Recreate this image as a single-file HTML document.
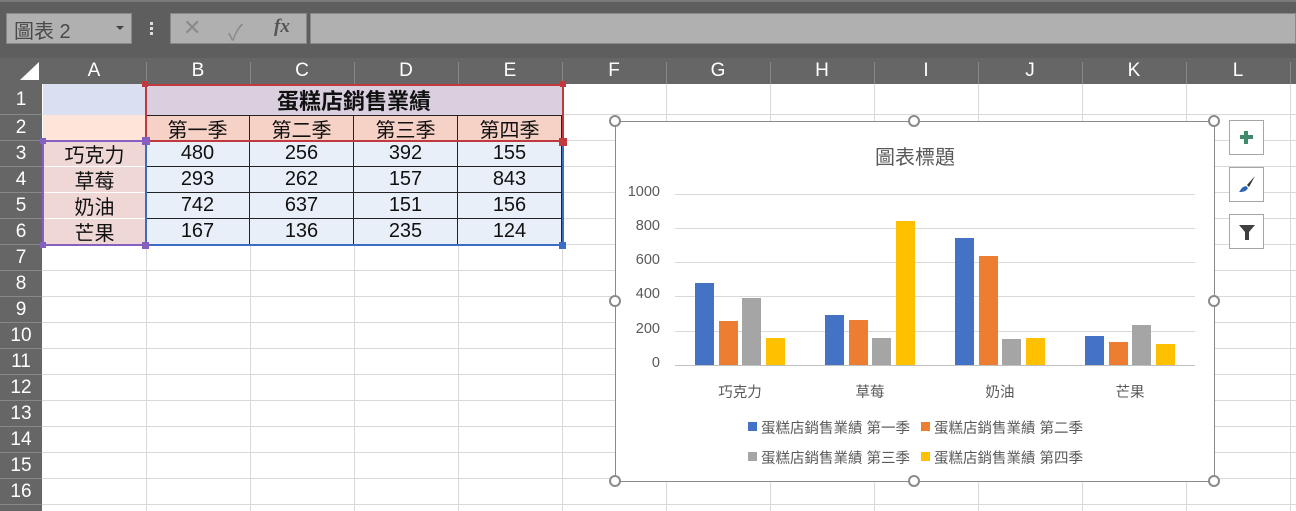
<!DOCTYPE html>
<html><head><meta charset="utf-8"><style>
*{margin:0;padding:0;box-sizing:border-box}
body{width:1296px;height:511px;overflow:hidden;background:#fff;position:relative;font-family:"Liberation Sans","Noto Sans CJK TC",sans-serif}
.a{position:absolute}
.c{position:absolute;display:flex;align-items:center;justify-content:center;font-size:20px;color:#111;font-family:"Liberation Sans","Noto Sans CJK TC",sans-serif}
.h{position:absolute;color:#fff;font-size:19px;display:flex;align-items:center;justify-content:center}
.gl{position:absolute;background:#d9d9d9}
.hd{position:absolute;width:12px;height:12px;border:2px solid #8a8a8a;border-radius:50%;background:#fff}
.t{position:absolute;font-size:14.5px;color:#595959;font-family:"Liberation Sans","Noto Sans CJK TC",sans-serif;white-space:nowrap}
</style></head><body>
<div class="a" style="left:0;top:0;width:1296px;height:58px;background:#5e5e5e;border-top:2px solid #7a7a7a"></div>
<div class="a" style="left:6px;top:13px;width:126px;height:31px;background:#b0b0b0;border:1px solid #888;font-size:20px;color:#4a4a4a;padding:1px 0 0 7px;font-family:'Liberation Sans','Noto Sans CJK TC',sans-serif">圖表 2</div>
<div class="a" style="left:116px;top:26px;border-left:4px solid transparent;border-right:4px solid transparent;border-top:4px solid #444"></div>
<div class="a" style="left:150px;top:22px;width:3px;height:13px;border-top:3px solid #ddd;border-bottom:3px solid #ddd"></div><div class="a" style="left:150px;top:27px;width:3px;height:3px;background:#ddd"></div>
<div class="a" style="left:170px;top:13px;width:137px;height:31px;background:#b0b0b0;border:1px solid #888"></div>
<div class="a" style="left:183px;top:15px;font-size:22px;color:#8a8a8a">✕</div>
<div class="a" style="left:228px;top:15px;font-size:22px;color:#8a8a8a">✓</div>
<div class="a" style="left:274px;top:16px;font-size:19px;color:#555;font-style:italic;font-weight:bold;font-family:'Liberation Serif',serif">fx</div>
<div class="a" style="left:310px;top:13px;width:986px;height:31px;background:#b0b0b0;border:1px solid #888"></div>
<div class="a" style="left:0;top:58px;width:1296px;height:26px;background:#666"></div>
<div class="a" style="left:0;top:84px;width:42px;height:427px;background:#666"></div>
<div class="a" style="left:20px;top:62px;width:0;height:0;border-left:19px solid transparent;border-bottom:18px solid #fff"></div>
<div id="hdr"></div>
<div id="grid"></div>
<script>
var s='';var L='ABCDEFGHIJKL';
for(var i=0;i<12;i++){var x=42+i*104;s+='<div class="h" style="left:'+x+'px;top:58px;width:104px;height:26px">'+L[i]+'</div><div class="a" style="left:'+(x+104)+'px;top:62px;width:1px;height:22px;background:#888"></div>';}
var rt=[84,115,141];for(var r=3;r<17;r++)rt.push(141+(r-2)*26);
for(var r=0;r<16;r++){var y=rt[r],hh=rt[r+1]-y;s+='<div class="h" style="left:0;top:'+y+'px;width:42px;height:'+hh+'px">'+(r+1)+'</div><div class="a" style="left:0;top:'+(y+hh-1)+'px;width:42px;height:1px;background:#888"></div>';}
var g='';for(var i=1;i<13;i++){g+='<div class="gl" style="left:'+(42+i*104)+'px;top:84px;width:1px;height:427px"></div>';}
for(var r=1;r<17;r++){g+='<div class="gl" style="left:42px;top:'+(rt[r]-1)+'px;width:1254px;height:1px"></div>';}
document.getElementById('hdr').outerHTML=s;document.getElementById('grid').outerHTML=g;
</script>
<div class="a" style="left:43px;top:84px;width:103px;height:31px;background:#dae0f1"></div>
<div class="c" style="left:146px;top:84px;width:416px;height:31px;background:#d9cfdf;font-weight:bold;font-size:22px">蛋糕店銷售業績</div>
<div class="a" style="left:43px;top:115px;width:103px;height:26px;background:#fde5d9"></div>
<div id="tb"></div>
<script>
var h=['第一季','第二季','第三季','第四季'],n=['巧克力','草莓','奶油','芒果'],d=[[480,256,392,155],[293,262,157,843],[742,637,151,156],[167,136,235,124]];var s='';
for(var i=0;i<4;i++)s+='<div class="c" style="left:'+(146+i*104)+'px;top:115px;width:104px;height:26px;background:#f6d1c6;border-right:1px solid #222;border-top:1px solid #222">'+h[i]+'</div>';
for(var r=0;r<4;r++){var y=141+r*26;s+='<div class="c" style="left:43px;top:'+y+'px;width:103px;height:26px;background:#efd7d5;border-bottom:1px solid #fff">'+n[r]+'</div>';
for(var i=0;i<4;i++)s+='<div class="c" style="left:'+(146+i*104)+'px;top:'+y+'px;width:104px;height:26px;background:#e9eff9;border-right:1px solid #222;border-bottom:1px solid #222">'+d[r][i]+'</div>';}
document.getElementById('tb').outerHTML=s;
</script>
<div class="a" style="left:145px;top:84px;width:419px;height:58px;border:2px solid #c0393e"></div>
<div class="a" style="left:42px;top:140px;width:105px;height:106px;border:2px solid #8660c0"></div>
<div class="a" style="left:145px;top:140px;width:419px;height:106px;border:2px solid #3c6cc4;border-top:none"></div>
<div class="a" style="left:142px;top:81px;width:6px;height:6px;background:#c0393e"></div>
<div class="a" style="left:560px;top:81px;width:6px;height:6px;background:#c0393e"></div>
<div class="a" style="left:559px;top:138px;width:8px;height:8px;background:#c0393e"></div>
<div class="a" style="left:142px;top:137px;width:8px;height:8px;background:#8660c0"></div>
<div class="a" style="left:40px;top:138px;width:6px;height:6px;background:#8660c0"></div>
<div class="a" style="left:40px;top:242px;width:6px;height:6px;background:#8660c0"></div>
<div class="a" style="left:142px;top:242px;width:7px;height:7px;background:#8660c0"></div>
<div class="a" style="left:559px;top:242px;width:7px;height:7px;background:#3c6cc4"></div>
<div class="a" style="left:615px;top:121px;width:600px;height:361px;background:#fff;border:1px solid #8a8a8a"></div>
<div class="a" style="left:615px;top:141px;width:600px;text-align:center;font-size:20px;color:#595959;font-family:'Liberation Sans','Noto Sans CJK TC',sans-serif">圖表標題</div>
<div id="ch"></div>
<script>
var s='';var ys=[365,331,296,262,228,194],lb=['0','200','400','600','800','1000'];
for(var i=0;i<6;i++){s+='<div class="a" style="left:675px;top:'+ys[i]+'px;width:520px;height:1px;background:'+(i?'#d9d9d9':'#bfbfbf')+'"></div><div class="t" style="left:610px;width:50px;text-align:right;top:'+(ys[i]-10)+'px">'+lb[i]+'</div>';}
var col=['#4472c4','#ed7d31','#a5a5a5','#ffc000'];
for(var c=0;c<4;c++){for(var q=0;q<4;q++){var v=d[c][q],hh=v*171/1000,x=695+c*130+q*23.7;s+='<div class="a" style="left:'+x+'px;top:'+(365-hh)+'px;width:19px;height:'+hh+'px;background:'+col[q]+'"></div>';}
s+='<div class="t" style="left:'+(675+c*130)+'px;width:130px;text-align:center;top:381px">'+n[c]+'</div>';}
var lg=[[748,427,0],[921,427,1],[748,457,2],[921,457,3]];
for(var i=0;i<4;i++){var L=lg[i];s+='<div class="a" style="left:'+L[0]+'px;top:'+(L[1]-5)+'px;width:9px;height:9px;background:'+col[L[2]]+'"></div><div class="t" style="left:'+(L[0]+13)+'px;top:'+(L[1]-10)+'px">蛋糕店銷售業績 '+h[L[2]]+'</div>';}
var hp=[[615,121],[914,121],[1214,121],[615,301],[1214,301],[615,481],[914,481],[1214,481]];
for(var i=0;i<8;i++)s+='<div class="hd" style="left:'+(hp[i][0]-6)+'px;top:'+(hp[i][1]-6)+'px"></div>';
document.getElementById('ch').outerHTML=s;
</script>
<div class="a" style="left:1229px;top:120px;width:35px;height:35px;background:#fff;border:1px solid #a6a6a6"></div>
<div class="a" style="left:1240px;top:135px;width:13px;height:4px;background:#3f8a6a"></div>
<div class="a" style="left:1244px;top:131px;width:4px;height:13px;background:#3f8a6a"></div>
<div class="a" style="left:1229px;top:167px;width:35px;height:35px;background:#fff;border:1px solid #a6a6a6"></div>
<svg class="a" style="left:1236px;top:174px" width="22" height="22" viewBox="0 0 22 22"><path d="M19 2 L11 11 L13 13 Z" fill="#333"/><path d="M10 12 L12 14 C10 18 6 18 3 18 C5 16 5 13 10 12Z" fill="#2e64b8"/></svg>
<div class="a" style="left:1229px;top:214px;width:35px;height:35px;background:#fff;border:1px solid #a6a6a6"></div>
<svg class="a" style="left:1236px;top:221px" width="22" height="22" viewBox="0 0 22 22"><path d="M3 4 H19 L13 11 V19 H9 V11 Z" fill="#404040"/></svg>
</body></html>
